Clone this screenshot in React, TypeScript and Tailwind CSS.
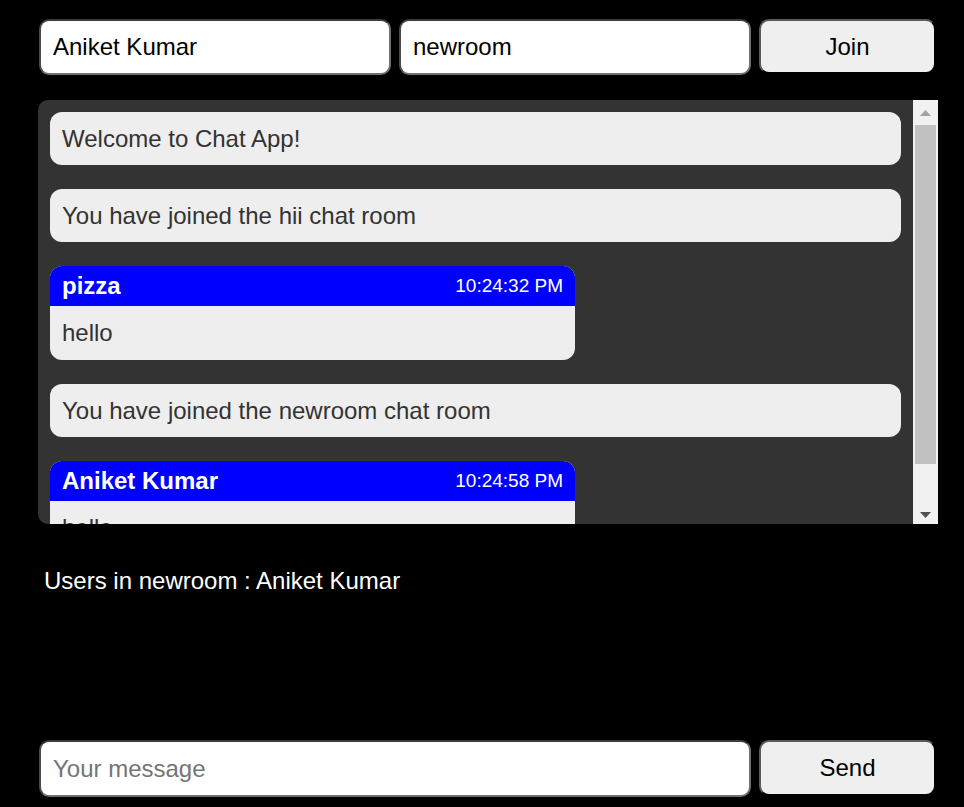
import React from 'react'

const font = { fontFamily: '"Liberation Sans", Arial, sans-serif' }

const inputCls =
  'h-[56px] rounded-[10px] bg-white px-3 text-[24px] text-black outline-none border-2 border-t-[#3c3c3c] border-l-[#4a4a4a] border-r-[#707070] border-b-[#707070] placeholder:text-[#757575]'

const btnCls =
  'h-[55px] rounded-[10px] bg-[#efefef] text-[24px] text-black border-2 border-t-[#5a5a5a] border-l-[#5a5a5a] border-r-black border-b-black'

function Notice({ text }: { text: string }) {
  return (
    <div className="h-[53px] shrink-0 flex items-center rounded-[12px] bg-[#eeeeee] px-3 text-[24px] text-[#333333]">
      {text}
    </div>
  )
}

function Message({ name, time, body }: { name: string; time: string; body: string }) {
  return (
    <div className="w-[525px] shrink-0 overflow-hidden rounded-[12px] bg-[#eeeeee]">
      <div className="h-[40px] flex items-center justify-between bg-[#0000ff] px-3 text-white">
        <span className="text-[24px] font-bold">{name}</span>
        <span className="text-[19px]">{time}</span>
      </div>
      <div className="h-[54px] flex items-center px-3 text-[24px] text-[#333333]">{body}</div>
    </div>
  )
}

function Scrollbar() {
  return (
    <div className="w-[25px] shrink-0 flex flex-col items-center bg-[#f1f1f1]">
      <div className="h-[25px] flex items-center justify-center">
        <svg width="11" height="6" viewBox="0 0 11 6">
          <path d="M5.5 0 L11 6 L0 6 Z" fill="#a3a3a3" />
        </svg>
      </div>
      <div className="w-[21px] h-[339px] bg-[#c1c1c1]" />
      <div className="flex-1 flex items-end justify-center pb-[6px]">
        <svg width="11" height="6" viewBox="0 0 11 6">
          <path d="M0 0 L11 0 L5.5 6 Z" fill="#505050" />
        </svg>
      </div>
    </div>
  )
}

export default function App() {
  return (
    <div className="min-h-[807px] w-full bg-black" style={font}>
      <div className="flex flex-col pl-[39px] pr-[28px] pt-[19px]">
        <div className="flex gap-2">
          <input className={`${inputCls} w-[352px]`} defaultValue="Aniket Kumar" />
          <input className={`${inputCls} w-[352px]`} defaultValue="newroom" />
          <button className={`${btnCls} w-[177px]`}>Join</button>
        </div>

        <div className="-ml-px mt-[25px] h-[424px] w-[900px] flex overflow-hidden rounded-l-[10px] bg-[#333333]">
          <div className="flex-1 flex flex-col gap-6 overflow-hidden p-3 pb-0">
            <Notice text="Welcome to Chat App!" />
            <Notice text="You have joined the hii chat room" />
            <Message name="pizza" time="10:24:32 PM" body="hello" />
            <Notice text="You have joined the newroom chat room" />
            <Message name="Aniket Kumar" time="10:24:58 PM" body="hello" />
          </div>
          <Scrollbar />
        </div>

        <div className="mt-[43px] pl-[5px] text-[24px] leading-[28px] text-white">
          Users in newroom : Aniket Kumar
        </div>

        <div className="mt-[145px] flex gap-2">
          <input className={`${inputCls} w-[712px] h-[57px]`} placeholder="Your message" />
          <button className={`${btnCls} w-[177px] h-[56px]`}>Send</button>
        </div>
      </div>
    </div>
  )
}
